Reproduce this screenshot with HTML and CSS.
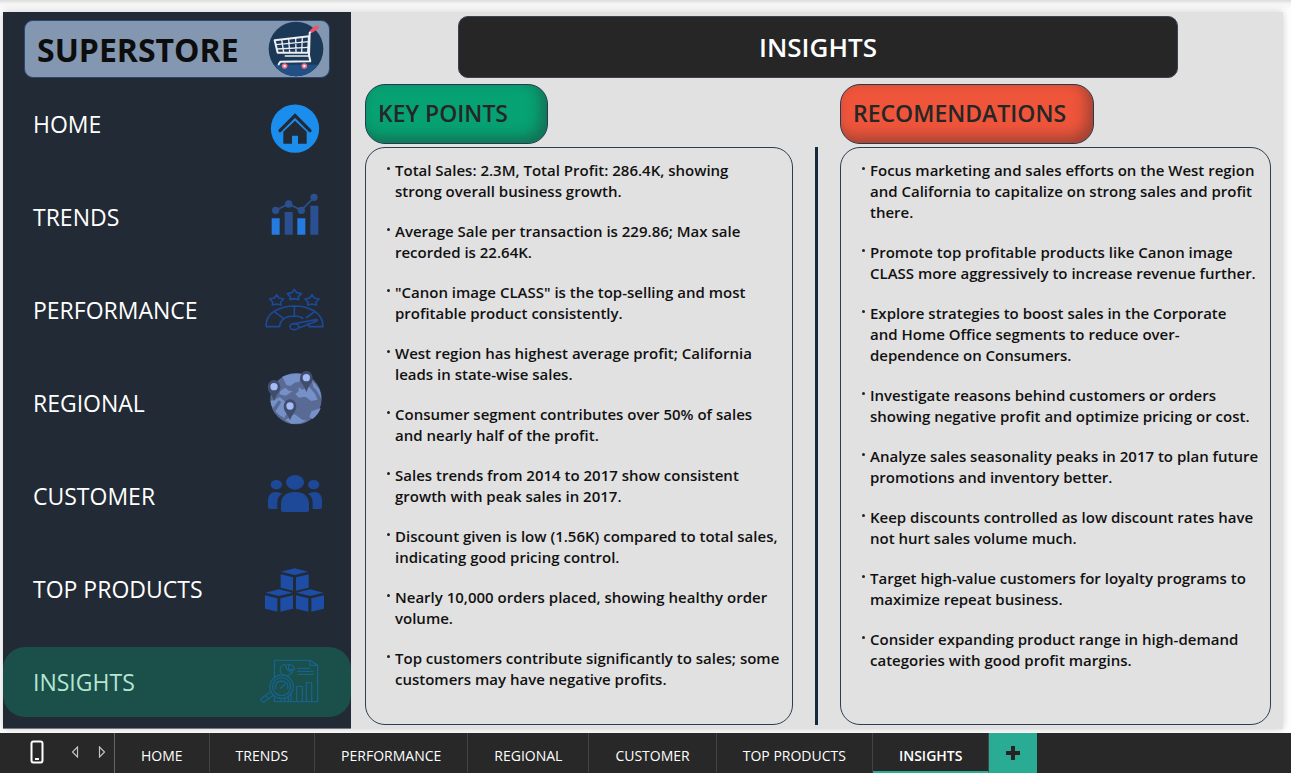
FILE: index.html
```html
<!DOCTYPE html>
<html lang="en">
<head>
<meta charset="utf-8">
<title>Superstore Insights</title>
<link rel="stylesheet" href="styles.css">
</head>
<body>
<div class="report">
  <aside class="sidebar">
    <div class="brand">
      <span class="brand-name">SUPERSTORE</span>
      <svg class="brand-logo" viewBox="805 63 168 168" aria-hidden="true">
        <defs><clipPath id="disc"><circle cx="889" cy="147" r="82"/></clipPath></defs>
        <circle cx="889" cy="147" r="82" fill="#1c3857"/>
        <rect x="805" y="194" width="168" height="40" fill="#225084" clip-path="url(#disc)"/>
        <g fill="none" stroke="#eceff4" stroke-linejoin="round" stroke-linecap="round">
          <path d="M825 121L928 109L925 158L834 158Z" stroke-width="6"/>
          <path d="M829 134L927 125M831 147L926 142M846 119L852 157M867 117L870 157M888 114L889 157M908 112L906 157" stroke-width="4"/>
          <path d="M936 93L930 98L928 166L932 184L842 185L837 193" stroke-width="6"/>
          <path d="M857 168H928" stroke-width="5"/>
        </g>
        <path d="M937 92L952 82" stroke="#f4506a" stroke-width="11" stroke-linecap="round"/>
        <g fill="#fff" stroke="#ee6c84" stroke-width="5"><circle cx="855" cy="198" r="6"/><circle cx="914" cy="198" r="6"/></g>
      </svg>
    </div>
    <nav class="nav">
      <a class="nav-item" href="#home">HOME
        <svg viewBox="777 267 210 210" aria-hidden="true">
          <circle cx="885" cy="386" r="72.500" fill="#1b8ded"/>
          <path d="M840 392L885 347L930 392" fill="none" stroke="#222a35" stroke-width="10" stroke-linecap="round"/>
          <path d="M850 395L885 362L920 395V431H894V407H876V431H850Z" fill="#222a35"/>
        </svg></a>
      <a class="nav-item" href="#trends">TRENDS
        <svg viewBox="57 6 210 210" aria-hidden="true">
          <path d="M95 115h24v49h-24zM172 115h24v49h-24z" fill="#267be0"/>
          <path d="M134 96h24v68h-24zM211 77h24v87h-24z" fill="#2b5092"/>
          <path d="M107 91L146 72L184 91L222 52" fill="none" stroke="#2b5092" stroke-width="5"/>
          <g fill="#2b5092"><circle cx="107" cy="91" r="11"/><circle cx="146" cy="72" r="11"/><circle cx="184" cy="91" r="11"/><circle cx="222" cy="52" r="11"/></g>
        </svg></a>
      <a class="nav-item" href="#performance">PERFORMANCE
        <svg viewBox="57 285 210 210" aria-hidden="true">
          <g fill="none" stroke="#1d4998" stroke-width="5" stroke-linejoin="round">
            <path id="star" d="M163 328L170 338L184 341L175 350L176 359L163 356L150 359L151 350L142 341L156 338Z"/>
            <use href="#star" x="-53" y="16"/><use href="#star" x="53" y="16"/>
            <path d="M78 440Q78 408 103 394Q130 378 164 378Q197 378 224 394Q249 410 249 440H208L204 429M78 440H119Q121 409 163 408Q180 408 190 416M103 395L131 416M163 378V408M224 395L198 414"/>
            <path d="M158 432L228 419Q235 419 229 424L176 444"/>
            <ellipse cx="163" cy="440" rx="13" ry="9"/>
          </g>
        </svg></a>
      <a class="nav-item" href="#regional">REGIONAL
        <svg viewBox="57 54 210 210" aria-hidden="true">
          <circle cx="168" cy="146" r="77" fill="#596b95"/>
          <g fill="#7690c8">
            <path d="M127 80Q153 68 187 72L178 95L164 98L151 108L139 105Z"/>
            <path d="M187 119L208 111L225 131L233 149L214 153L196 140L177 143L166 132L176 124V112Z"/>
            <path d="M91 152L104 150L119 141L134 154L145 180L133 204Q95 184 91 152ZM121 123L135 113L147 122L158 124L137 137L118 133Z"/>
            <path d="M163 192L187 209L199 211Q182 224 154 221L136 210ZM214 184L242 174Q236 194 217 207L208 201Z"/>
            <path d="M216 93Q243 112 244 147Q236 132 229 120L220 112Z"/>
          </g>
          <path d="M97 176L116 151L124 156L104 188Z" fill="#596b95"/>
          <g id="pin"><path d="M199 126Q194 110 183 97C175 77 187 63 199 63S224 77 215 97Q204 111 199 126Z" fill="#414d6d"/><circle cx="199" cy="83" r="11" fill="#a5bcf6"/></g>
          <use href="#pin" x="-97" y="27"/><use href="#pin" x="-49" y="85"/>
        </svg></a>
      <a class="nav-item" href="#customer">CUSTOMER
        <svg viewBox="57 333 210 210" aria-hidden="true">
          <g fill="#1d4998"><ellipse cx="165" cy="397" rx="27" ry="22"/><ellipse cx="109" cy="404" rx="17" ry="14"/><ellipse cx="221" cy="404" rx="17" ry="14"/>
          <path d="M123 480V460Q126 426 165 426T207 460V480Q207 486 201 486H129Q123 486 123 480ZM84 471V448Q87 426 107 426Q118 426 126 431Q112 441 112 458V477H90Q84 477 84 471ZM246 471V448Q243 426 223 426Q212 426 204 431Q218 441 218 458V477H240Q246 477 246 471Z"/></g>
        </svg></a>
      <a class="nav-item" href="#products">TOP PRODUCTS
        <svg viewBox="57 12 210 210" aria-hidden="true">
          <g fill="#1d4da5"><path id="box" d="M164 55L205 65L164 75L123 65ZM122 73L159 82V122L122 113ZM168 82L206 73V113L168 122Z"/>
          <use href="#box" x="-47" y="63"/><use href="#box" x="46" y="63"/></g>
        </svg></a>
      <a class="nav-item nav-item-active" href="#insights" aria-current="page">INSIGHTS
        <svg viewBox="57 291 210 210" aria-hidden="true">
          <g fill="none" stroke="#17618c" stroke-width="4" stroke-linejoin="round">
            <path d="M103 388V331H209L233 346V455H103V437M209 331V346H233"/>
            <path d="M136 343A19 17 0 1 0 158 362L141 359ZM141 343Q163 343 164 359H146V343M146 361L156 371M172 355H210M172 364H221M172 373H221"/>
            <circle cx="125" cy="410" r="35"/><circle cx="125" cy="410" r="27"/>
            <path d="M107 417Q104 393 126 393Q148 396 143 417M120 416L136 401M92 425L63 446Q60 452 71 457L101 435M77 438L88 447M145 455V440L153 429V455M170 455V409H187V455M199 455V398H215V455M123 455V445M134 455V444"/>
          </g>
        </svg></a>
    </nav>
  </aside>

  <main class="content">
    <h1 class="title">INSIGHTS</h1>
    <div class="columns">
      <section class="column column-points">
        <h2 class="badge badge-green">KEY POINTS</h2>
        <ul class="panel">
          <li>Total Sales: 2.3M, Total Profit: 286.4K, showing<br>strong overall business growth.</li>
          <li>Average Sale per transaction is 229.86; Max sale recorded is 22.64K.</li>
          <li>"Canon image CLASS" is the top-selling and most profitable product consistently.</li>
          <li>West region has highest average profit; California leads in state-wise sales.</li>
          <li>Consumer segment contributes over 50% of sales<br>and nearly half of the profit.</li>
          <li>Sales trends from 2014 to 2017 show consistent growth with peak sales in 2017.</li>
          <li>Discount given is low (1.56K) compared to total sales, indicating good pricing control.</li>
          <li>Nearly 10,000 orders placed, showing healthy order volume.</li>
          <li>Top customers contribute significantly to sales; some customers may have negative profits.</li>
        </ul>
      </section>
      <div class="divider"></div>
      <section class="column column-actions">
        <h2 class="badge badge-red">RECOMENDATIONS</h2>
        <ul class="panel">
          <li>Focus marketing and sales efforts on the West region and California to capitalize on strong sales and profit there.</li>
          <li>Promote top profitable products like Canon image CLASS more aggressively to increase revenue further.</li>
          <li>Explore strategies to boost sales in the Corporate<br>and Home Office segments to reduce over-<wbr>dependence on Consumers.</li>
          <li>Investigate reasons behind customers or orders showing negative profit and optimize pricing or cost.</li>
          <li>Analyze sales seasonality peaks in 2017 to plan future promotions and inventory better.</li>
          <li>Keep discounts controlled as low discount rates have not hurt sales volume much.</li>
          <li>Target high-value customers for loyalty programs to maximize repeat business.</li>
          <li>Consider expanding product range in high-demand categories with good profit margins.</li>
        </ul>
      </section>
    </div>
  </main>
</div>

<footer class="tabbar">
  <div class="tools">
    <button class="tool" aria-label="Mobile layout"><svg width="14" height="24" viewBox="0 0 14 24"><rect x="1.500" y="1.500" width="11" height="21" rx="2" fill="none" stroke="#fff" stroke-width="2"/><path d="M5 19h4" stroke="#fff" stroke-width="2"/></svg></button>
    <button class="tool" aria-label="Previous page"><svg width="8" height="12" viewBox="0 0 8 12"><path d="M6.500 1V11L1.500 6Z" fill="none" stroke="#c5c2bd" stroke-width="1.200"/></svg></button>
    <button class="tool" aria-label="Next page"><svg width="8" height="12" viewBox="0 0 8 12"><path d="M1.500 1V11L6.500 6Z" fill="none" stroke="#c5c2bd" stroke-width="1.200"/></svg></button>
  </div>
  <button class="tab">HOME</button>
  <button class="tab">TRENDS</button>
  <button class="tab">PERFORMANCE</button>
  <button class="tab">REGIONAL</button>
  <button class="tab">CUSTOMER</button>
  <button class="tab">TOP PRODUCTS</button>
  <button class="tab tab-active">INSIGHTS</button>
  <button class="add" aria-label="New page"><svg width="14" height="14" viewBox="0 0 14 14"><path d="M7 0V14M0 7H14" stroke="#252423" stroke-width="4"/></svg></button>
</footer>
</body>
</html>
```
FILE: styles.css
```css
* { box-sizing: border-box; }

body {
  margin: 0;
  min-height: 100vh;
  display: flex;
  flex-direction: column;
  background: linear-gradient(#dcdcdc, #f6f6f6 4px, #fff 12px);
  font-family: "Open Sans", "Noto Sans", sans-serif;
}

button { border: 0; padding: 0; background: none; font: inherit; color: inherit; }

.report {
  flex: 1;
  display: flex;
  margin: 12px 8px 4px 3px;
  background: #e1e1e1;
  box-shadow: 0 0 8px rgba(0, 0, 0, 0.2);
}

.sidebar {
  flex: 0 0 348px;
  background: #222a35;
  border-bottom: 1px solid #77777f;
}

.brand {
  display: flex;
  align-items: center;
  justify-content: space-between;
  height: 58px;
  margin: 8px 21px 11px;
  padding: 0 5px 0 12px;
  border: 1px solid #2c4674;
  border-radius: 9px;
  background: #8497b0;
}

.brand-name { color: #0d0d0d; font-size: 32px; font-weight: 700; }
.brand-logo { width: 56px; height: 56px; }

.nav { display: flex; flex-direction: column; gap: 23px; }

.nav-item {
  display: flex;
  align-items: center;
  justify-content: space-between;
  height: 70px;
  padding: 0 22px 0 30px;
  border-radius: 22px;
  color: #fff;
  font-size: 23px;
  text-decoration: none;
}

.nav-item svg { width: 70px; height: 70px; }
.nav-item-active { background: #1b4f49; color: #b5e5d3; }

.content {
  flex: 1;
  display: flex;
  flex-direction: column;
  padding: 4px 12px 4px 14px;
}

.title {
  width: 720px;
  max-width: 100%;
  margin: 0 auto 6px;
  border: 1px solid #3b4257;
  border-radius: 10px;
  background: #262626;
  color: #fff;
  font-size: 26px;
  font-weight: 600;
  line-height: 60px;
  text-align: center;
}

.columns { flex: 1; display: flex; gap: 22px; }
.column { display: flex; flex-direction: column; gap: 3px; align-items: flex-start; }
.column-points { flex: 428 1 0; }
.column-actions { flex: 431 1 0; }

.badge {
  margin: 0;
  padding: 0 27px 2px 12px;
  border: 1px solid #253a50;
  border-radius: 20px;
  color: #262626;
  font-size: 23px;
  font-weight: 600;
  line-height: 56px;
}

.badge-green { padding-right: 39px; background: #07a273; box-shadow: inset -6px -6px 14px rgba(38, 38, 38, 0.4); }
.badge-red { background: #ef553b; box-shadow: inset -6px -6px 14px rgba(38, 38, 38, 0.4); }

.panel {
  flex: 1;
  width: 100%;
  display: flex;
  flex-direction: column;
  gap: 19px;
  margin: 0;
  padding: 12px 8px 12px 29px;
  border: 1px solid #2b3e52;
  border-radius: 20px;
  color: #111;
  font-size: 15px;
  font-weight: 600;
  line-height: 21px;
  list-style: none;
}

.panel li { position: relative; }

.panel li::before {
  content: "";
  position: absolute;
  left: -8px;
  top: 7px;
  width: 3px;
  height: 3px;
  border-radius: 50%;
  background: #222;
}

.divider { width: 3px; margin-top: 63px; background: #17293f; }

.tabbar {
  display: flex;
  height: 40px;
  background: #282828;
  color: #fff;
  font-size: 14px;
}

.tools {
  display: flex;
  align-items: center;
  gap: 19px;
  padding: 0 8px 3px 30px;
  border-right: 1px solid #666;
}

.tool { display: flex; }
.tool:first-child { margin-right: 8px; }

.tab {
  padding: 6px 26px 0;
  border-right: 1px solid #444;
  border-bottom: 2px solid transparent;
}

.tab-active { border-bottom-color: #2aac94; font-weight: 600; }

.add {
  display: flex;
  align-items: center;
  justify-content: center;
  width: 48px;
  background: #2aac94;
}
```
